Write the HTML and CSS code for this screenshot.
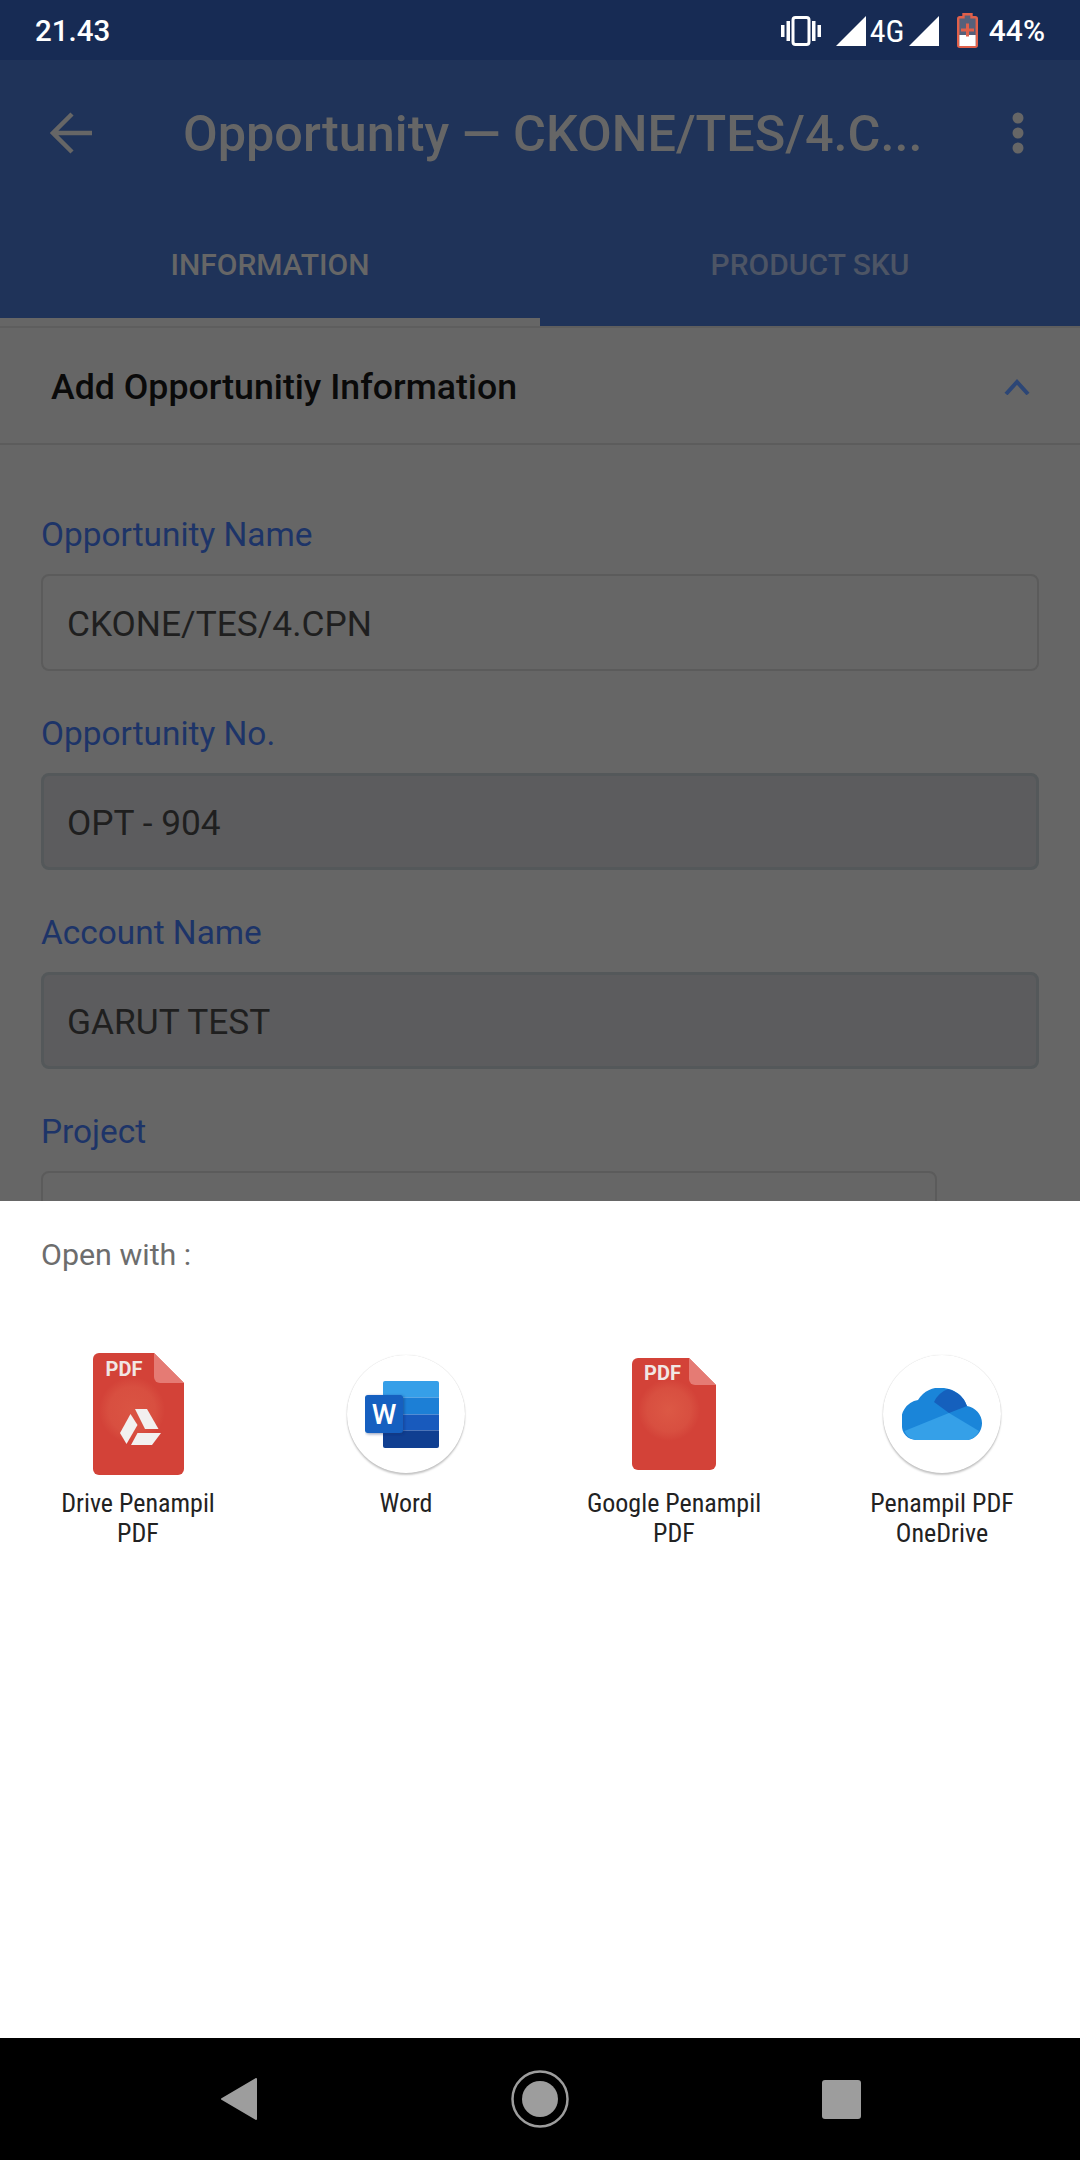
FILE: index.html
```html
<!DOCTYPE html>
<html lang="en">
<head>
<meta charset="utf-8">
<title>Opportunity</title>
<link rel="stylesheet" href="styles.css">
</head>
<body>
<div class="phone">
  <header class="status">
    <span class="clock">21.43</span>
    <div class="status-icons">
      <svg width="40" height="30" viewBox="0 0 40 30"><rect x="12" y="1.500" width="16" height="27" rx="2.500" fill="none" stroke="#fff" stroke-width="3"/><rect x="0" y="9" width="3.500" height="12" fill="#fff"/><rect x="5.500" y="5" width="3.500" height="20" fill="#fff"/><rect x="31" y="5" width="3.500" height="20" fill="#fff"/><rect x="36.500" y="9" width="3.500" height="12" fill="#fff"/></svg>
      <svg class="ic-signal" width="30" height="30" viewBox="0 0 30 30"><path d="M30 0V30H0Z" fill="#fff"/></svg>
      <span class="net">4G</span>
      <svg class="ic-signal2" width="30" height="30" viewBox="0 0 30 30"><path d="M30 0V30H0Z" fill="#fff"/></svg>
      <svg class="ic-battery" width="21" height="35" viewBox="0 0 21 35"><path d="M6.500 1.200h8v3h3.800a1.500 1.500 0 0 1 1.500 1.500v26.600a1.500 1.500 0 0 1-1.500 1.500H2.700a1.500 1.500 0 0 1-1.500-1.500V5.700a1.500 1.500 0 0 1 1.500-1.500h3.800z" fill="#56607a" stroke="#e0604a" stroke-width="2.400"/><rect x="2.400" y="22" width="16.200" height="11" fill="#fff"/><path d="M9 10.500h3V15.500h5v3h-5V23.500H9V18.500H4v-3h5z" fill="#e0604a"/></svg>
      <span class="pct">44%</span>
    </div>
  </header>

  <section class="appbar">
    <div class="toolbar">
      <svg width="44" height="44" viewBox="0 0 44 44"><path d="M42 22H6M22 3 3 22l19 19" fill="none" stroke="#666" stroke-width="4.500"/></svg>
      <h1 class="title">Opportunity — CKONE/TES/4.C...</h1>
      <svg width="12" height="42" viewBox="0 0 12 42"><circle cx="6" cy="6" r="5.500" fill="#666"/><circle cx="6" cy="21" r="5.500" fill="#666"/><circle cx="6" cy="36" r="5.500" fill="#666"/></svg>
    </div>
    <nav class="tabs">
      <div class="tab tab-active">INFORMATION</div>
      <div class="tab">PRODUCT SKU</div>
    </nav>
  </section>

  <main class="content">
    <div class="section-head">
      <h2 class="section-title">Add Opportunitiy Information</h2>
      <svg width="26" height="16" viewBox="0 0 26 16"><path d="M2 15 13 3l11 12" fill="none" stroke="#2c4676" stroke-width="4"/></svg>
    </div>
    <form class="form">
      <div class="field">
        <div class="field-label">Opportunity Name</div>
        <div class="input">CKONE/TES/4.CPN</div>
      </div>
      <div class="field">
        <div class="field-label">Opportunity No.</div>
        <div class="input input-disabled">OPT - 904</div>
      </div>
      <div class="field">
        <div class="field-label">Account Name</div>
        <div class="input input-disabled">GARUT TEST</div>
      </div>
      <div class="field field-short">
        <div class="field-label">Project</div>
        <div class="input"></div>
      </div>
    </form>
  </main>

  <aside class="sheet">
    <div class="sheet-title">Open with :</div>
    <div class="apps">
      <div class="app">
        <div class="app-icon">
          <svg width="91" height="122" viewBox="0 0 91 122">
            <defs>
              <radialGradient id="glowA"><stop offset="0" stop-color="#da5443"/><stop offset=".7" stop-color="#d84f40"/><stop offset="1" stop-color="#d34238"/></radialGradient>
            </defs>
            <path d="M6 0h55l30 30v86a6 6 0 0 1-6 6H6a6 6 0 0 1-6-6V6a6 6 0 0 1 6-6z" fill="#d34238"/>
            <circle cx="39" cy="57" r="33" fill="url(#glowA)"/>
            <path d="M61 0l30 30H67a6 6 0 0 1-6-6z" fill="#e57b74"/>
            <text class="pdf-mark" x="12.500" y="23">PDF</text>
            <path d="M42 56h12l11.500 20H52z" fill="#f2f0ef"/>
            <path d="M37.500 61 44.500 72 33.500 91 27 80z" fill="#f2f0ef"/>
            <path d="M44.500 80H68L59 92H38z" fill="#f2f0ef"/>
          </svg>
        </div>
        <div class="app-name">Drive Penampil PDF</div>
      </div>
      <div class="app">
        <div class="app-icon">
          <div class="round">
            <svg width="83" height="67" viewBox="0 0 83 67">
              <defs>
                <filter id="softW" x="-20%" y="-20%" width="140%" height="140%"><feDropShadow dx="1" dy="1" stdDeviation="1.500" flood-color="#0b2a66" flood-opacity=".5"/></filter>
              </defs>
              <path d="M18 2a2 2 0 0 1 2-2h52a2 2 0 0 1 2 2v14.500H18z" fill="#369fe8"/>
              <rect x="18" y="16.500" width="56" height="17" fill="#1c7fd6"/>
              <rect x="18" y="33.500" width="56" height="16" fill="#185abd"/>
              <path d="M18 49.500h56V65a2 2 0 0 1-2 2H20a2 2 0 0 1-2-2z" fill="#103f91"/>
              <rect x="0" y="14" width="38" height="38" rx="3" fill="#1260c0" filter="url(#softW)"/>
              <text class="word-mark" x="19" y="43">W</text>
            </svg>
          </div>
        </div>
        <div class="app-name">Word</div>
      </div>
      <div class="app">
        <div class="app-icon">
          <svg width="84" height="112" viewBox="0 0 84 112">
            <defs>
              <radialGradient id="glowB"><stop offset="0" stop-color="#dc5845"/><stop offset=".7" stop-color="#d84f40"/><stop offset="1" stop-color="#d34238"/></radialGradient>
            </defs>
            <path d="M6 0h51l27 27v79a6 6 0 0 1-6 6H6a6 6 0 0 1-6-6V6a6 6 0 0 1 6-6z" fill="#d34238"/>
            <circle cx="37" cy="52" r="31" fill="url(#glowB)"/>
            <path d="M57 0l27 27H63a6 6 0 0 1-6-6z" fill="#e57b74"/>
            <text class="pdf-mark" x="12" y="22">PDF</text>
          </svg>
        </div>
        <div class="app-name">Google Penampil PDF</div>
      </div>
      <div class="app">
        <div class="app-icon">
          <div class="round">
            <svg width="80" height="52" viewBox="0 0 80 52">
              <path d="M14 52A14 14 0 0 1 0 37 20 20 0 0 1 16 12 25 25 0 0 1 42 0 27 27 0 0 1 65 18 18 18 0 0 1 80 35 17 17 0 0 1 66 52z" fill="#1a85d9"/>
              <path d="M32 14A25 25 0 0 1 46 1 27 27 0 0 1 65 18L47 25z" fill="#1560bd"/>
              <path d="M14 52A14 14 0 0 1 2.500 43L37 29 47 25 77 43A16 16 0 0 1 66 52z" fill="#35a0e8"/>
            </svg>
          </div>
        </div>
        <div class="app-name">Penampil PDF OneDrive</div>
      </div>
    </div>
  </aside>

  <footer class="navbar">
    <svg width="38" height="42" viewBox="0 0 38 42"><path d="M36 1v40L2 21z" fill="#9d9d9d" stroke="#9d9d9d" stroke-width="2" stroke-linejoin="round"/></svg>
    <svg width="58" height="58" viewBox="0 0 58 58"><circle cx="29" cy="29" r="27.500" fill="none" stroke="#9d9d9d" stroke-width="2.500"/><circle cx="29" cy="29" r="18" fill="#9d9d9d"/></svg>
    <div class="nav-square"></div>
  </footer>
</div>
</body>
</html>
```

FILE: styles.css
```css
* { box-sizing: border-box; }

html, body {
  margin: 0;
  padding: 0;
}

body {
  width: 1080px;
  height: 2160px;
  overflow: hidden;
  font-family: Roboto, "Liberation Sans", sans-serif;
}

.phone {
  width: 1080px;
  height: 2160px;
  display: flex;
  flex-direction: column;
  background: #666;
}

/* status bar */
.status {
  height: 60px;
  flex: none;
  background: #172b54;
  color: #fff;
  display: flex;
  align-items: center;
  justify-content: space-between;
  padding: 1px 35px 0 35px;
}

.clock {
  font-size: 29.500px;
  font-weight: 500;
}

.status-icons {
  display: flex;
  align-items: center;
}

.ic-signal { margin-left: 15px; }
.net { font-size: 32px; font-stretch: 75%; margin-left: 4px; width: 31px; }
.ic-signal2 { margin-left: 8px; }
.ic-battery { margin-left: 18px; }
.pct { font-size: 30px; font-weight: 500; margin-left: 11px; }

/* app bar with tabs */
.appbar {
  height: 266px;
  flex: none;
  background: #1f3359;
  display: flex;
  flex-direction: column;
}

.toolbar {
  height: 112px;
  margin-top: 17px;
  display: flex;
  align-items: center;
  padding: 0 56px 0 50px;
}

.title {
  flex: 1;
  margin: 0 0 0 89px;
  font-size: 50.400px;
  font-weight: 500;
  color: #666;
  white-space: nowrap;
}

.tabs {
  display: flex;
  flex: 1;
}

.tab {
  flex: 1;
  display: flex;
  align-items: center;
  justify-content: center;
  padding-top: 14px;
  font-size: 30px;
  font-weight: 500;
  color: #4d5565;
}

.tab-active {
  color: #666;
  border-bottom: 8px solid #666;
  padding-top: 22px;
}

/* form behind the scrim */
.content {
  flex: 1;
  min-height: 0;
  overflow: hidden;
}

.section-head {
  height: 119px;
  display: flex;
  align-items: center;
  justify-content: space-between;
  padding: 3px 50px 0 51px;
  border-top: 2px solid #5e5e5e;
  border-bottom: 2px solid #5c5c5c;
}

.section-title {
  margin: 0;
  font-size: 35.700px;
  font-weight: 500;
  color: #0a0a0a;
}

.form {
  padding: 69px 41px 0;
  display: flex;
  flex-direction: column;
  gap: 42px;
}

.field-short {
  padding-right: 102px;
}

.field-label {
  padding-top: 1px;
  font-size: 33.400px;
  line-height: 39px;
  color: #1d3468;
}

.input {
  height: 97px;
  margin-top: 20px;
  padding: 3px 24px 0;
  display: flex;
  align-items: center;
  border: 2px solid #5b5b5b;
  border-radius: 8px;
  font-size: 35.300px;
  color: #1f1f1f;
}

.input-disabled {
  background: #5c5c5e;
  border: 3px solid #54585a;
  padding-left: 23px;
}

/* chooser sheet */
.sheet {
  position: absolute;
  left: 0;
  top: 1201px;
  width: 1080px;
  height: 837px;
  background: #fff;
}

.sheet-title {
  padding: 36px 0 0 41px;
  font-size: 30.400px;
  line-height: 36px;
  color: #6d6d6d;
}

.apps {
  display: grid;
  grid-template-columns: repeat(4, 268px);
  padding: 0 0 0 4px;
  margin-top: 79px;
}

.app {
  display: flex;
  flex-direction: column;
  align-items: center;
}

.app-icon {
  height: 124px;
  display: flex;
  align-items: center;
  justify-content: center;
}

.round {
  width: 118px;
  height: 118px;
  border-radius: 50%;
  background: #fff;
  box-shadow: 0 2px 2px rgba(0, 0, 0, .22), 0 0 1px rgba(0, 0, 0, .2);
  display: flex;
  align-items: center;
  justify-content: center;
}

.pdf-mark {
  font-family: Roboto, sans-serif;
  font-size: 20px;
  font-weight: 700;
  fill: #f1e6e4;
}

.word-mark {
  font-family: Roboto, sans-serif;
  font-size: 28px;
  font-weight: 500;
  fill: #fff;
  text-anchor: middle;
}

.app-name {
  width: 180px;
  margin-top: 12px;
  text-align: center;
  font-size: 26px;
  font-stretch: 85%;
  line-height: 30px;
  color: #222;
}

/* navigation bar */
.navbar {
  position: absolute;
  left: 0;
  top: 2038px;
  width: 1080px;
  height: 122px;
  background: #000;
  display: grid;
  grid-template-columns: repeat(3, 301px);
  justify-content: center;
  justify-items: center;
  align-items: center;
}

.nav-square {
  width: 39px;
  height: 39px;
  border-radius: 3px;
  background: #9d9d9d;
}
```
